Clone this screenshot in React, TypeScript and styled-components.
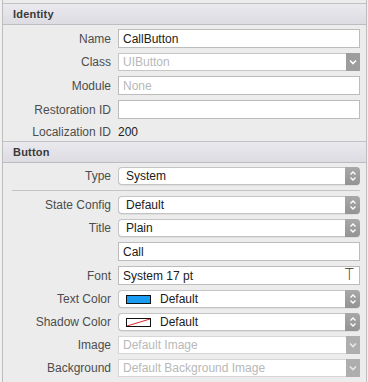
import React from 'react';
import styled, { createGlobalStyle } from 'styled-components';

const GlobalStyle = createGlobalStyle`
  html, body {
    margin: 0;
    padding: 0;
    background: #f0f0f0;
  }
  body {
    font-family: "Liberation Sans", Arial, sans-serif;
    font-size: 12px;
    color: #262626;
  }
`;

const Panel = styled.div`
  width: 365px;
  height: 382px;
  margin-left: 2px;
  padding-top: 3px;
  box-sizing: border-box;
  background: #ececec;
  border-left: 1px solid #bdbdbd;
  border-right: 1px solid #bdbdbd;
  overflow: hidden;
`;

const SectionHeader = styled.div`
  height: 20px;
  display: flex;
  align-items: center;
  padding-left: 10px;
  font-size: 11px;
  font-weight: bold;
  color: #3a3a3a;
  letter-spacing: 0.2px;
  background: linear-gradient(#e9e9ee, #dcdce2);
  border-top: 1px solid #c2c2c2;
  border-bottom: 1px solid #bcbcc2;
`;

const SectionBody = styled.div<{ $bottom?: number }>`
  display: flex;
  flex-direction: column;
  gap: 5px;
  padding: 4px 6px ${p => p.$bottom ?? 5}px 0;
`;

const Row = styled.div<{ $height?: number }>`
  display: grid;
  grid-template-columns: 108px 1fr;
  column-gap: 7px;
  align-items: center;
  ${p => (p.$height ? `height: ${p.$height}px;` : '')}
`;

const Label = styled.div`
  text-align: right;
  color: #4d4d4d;
  font-size: 12px;
  white-space: nowrap;
`;

const TextField = styled.div<{ $placeholder?: boolean }>`
  height: 19px;
  box-sizing: border-box;
  background: #fff;
  border: 1px solid #bcbcbc;
  display: flex;
  align-items: center;
  padding: 0 4px;
  color: ${p => (p.$placeholder ? '#b8b8b8' : '#202020')};
  position: relative;
`;

const FlatPopup = styled.div<{ $disabled?: boolean }>`
  height: 18px;
  box-sizing: border-box;
  background: #fff;
  border: 1px solid ${p => (p.$disabled ? '#d6d6d6' : '#c6c6c6')};
  border-right: none;
  display: flex;
  align-items: center;
  color: #b8b8b8;
`;

const FlatPopupText = styled.span`
  flex: 1;
  padding-left: 4px;
  white-space: nowrap;
  overflow: hidden;
`;

const FlatArrow = styled.div<{ $disabled?: boolean }>`
  width: 14px;
  height: 18px;
  margin-top: -1px;
  margin-bottom: -1px;
  background: ${p => (p.$disabled ? '#aeaeae' : '#9d9d9d')};
  display: flex;
  align-items: center;
  justify-content: center;
`;

const RoundPopup = styled.div`
  height: 18px;
  box-sizing: border-box;
  background: #fff;
  border-radius: 4px;
  border: 1px solid #c4c4c4;
  border-right: none;
  box-shadow: 0 1px 0 rgba(0, 0, 0, 0.06);
  display: flex;
  align-items: center;
  color: #202020;
`;

const RoundPopupText = styled.span`
  flex: 1;
  display: flex;
  align-items: center;
  gap: 9px;
  padding-left: 7px;
  white-space: nowrap;
`;

const StepArrow = styled.div`
  width: 15px;
  height: 18px;
  margin: -1px 0;
  border-radius: 0 4px 4px 0;
  background: linear-gradient(#a8a8a8, #939393);
  display: flex;
  align-items: center;
  justify-content: center;
`;

const Value = styled.div`
  color: #202020;
  font-size: 12px;
`;

const Separator = styled.div`
  height: 1px;
  background: #c4c4c4;
  margin: 0 0 0 9px;
`;

const Swatch = styled.div<{ $color: string }>`
  width: 23px;
  height: 7px;
  border: 1px solid #111;
  background: ${p => p.$color};
  position: relative;
  overflow: hidden;
`;

const FontGlyph = styled.span`
  position: absolute;
  right: 5px;
  top: 0;
  font-family: "DejaVu Sans", sans-serif;
  font-size: 15px;
  line-height: 17px;
  color: #333;
  font-weight: 200;
`;

const DownChevron = ({ light }: { light?: boolean }) => (
  <svg width="8" height="6" viewBox="0 0 8 6">
    <path d="M1 1.5 L4 4.5 L7 1.5" fill="none" stroke={light ? '#e8e8e8' : '#fff'} strokeWidth="1.6" />
  </svg>
);

const UpDownChevron = () => (
  <svg width="8" height="12" viewBox="0 0 8 12">
    <path d="M1.5 4.5 L4 2 L6.5 4.5 M1.5 7.5 L4 10 L6.5 7.5" fill="none" stroke="#fff" strokeWidth="1.3" />
  </svg>
);

const SlashSwatch = () => (
  <Swatch $color="#fff">
    <svg width="23" height="7" viewBox="0 0 23 7" style={{ position: 'absolute', left: 0, top: 0 }}>
      <line x1="0" y1="7" x2="23" y2="0" stroke="#e0262c" strokeWidth="1" />
    </svg>
  </Swatch>
);

const Stepper = ({ children }: { children: React.ReactNode }) => (
  <RoundPopup>
    <RoundPopupText>{children}</RoundPopupText>
    <StepArrow>
      <UpDownChevron />
    </StepArrow>
  </RoundPopup>
);

const Dropdown = ({ text, disabled }: { text: string; disabled?: boolean }) => (
  <FlatPopup $disabled={disabled}>
    <FlatPopupText>{text}</FlatPopupText>
    <FlatArrow $disabled={disabled}>
      <DownChevron light={disabled} />
    </FlatArrow>
  </FlatPopup>
);

export default function App() {
  return (
    <>
      <GlobalStyle />
      <Panel>
        <SectionHeader>Identity</SectionHeader>
        <SectionBody $bottom={1}>
          <Row>
            <Label>Name</Label>
            <TextField>CallButton</TextField>
          </Row>
          <Row>
            <Label>Class</Label>
            <Dropdown text="UIButton" />
          </Row>
          <Row>
            <Label>Module</Label>
            <TextField $placeholder>None</TextField>
          </Row>
          <Row>
            <Label>Restoration ID</Label>
            <TextField />
          </Row>
          <Row $height={16}>
            <Label>Localization ID</Label>
            <Value>200</Value>
          </Row>
        </SectionBody>
        <SectionHeader>Button</SectionHeader>
        <SectionBody>
          <Row>
            <Label>Type</Label>
            <Stepper>System</Stepper>
          </Row>
          <Separator />
          <Row>
            <Label>State Config</Label>
            <Stepper>Default</Stepper>
          </Row>
          <Row>
            <Label>Title</Label>
            <Stepper>Plain</Stepper>
          </Row>
          <Row>
            <span />
            <TextField>Call</TextField>
          </Row>
          <Row>
            <Label>Font</Label>
            <TextField>
              System 17 pt
              <FontGlyph>T</FontGlyph>
            </TextField>
          </Row>
          <Row>
            <Label>Text Color</Label>
            <Stepper>
              <Swatch $color="#1a9cf3" />
              Default
            </Stepper>
          </Row>
          <Row>
            <Label>Shadow Color</Label>
            <Stepper>
              <SlashSwatch />
              Default
            </Stepper>
          </Row>
          <Row>
            <Label>Image</Label>
            <Dropdown text="Default Image" disabled />
          </Row>
          <Row>
            <Label>Background</Label>
            <Dropdown text="Default Background Image" disabled />
          </Row>
          <Separator />
        </SectionBody>
      </Panel>
    </>
  );
}
